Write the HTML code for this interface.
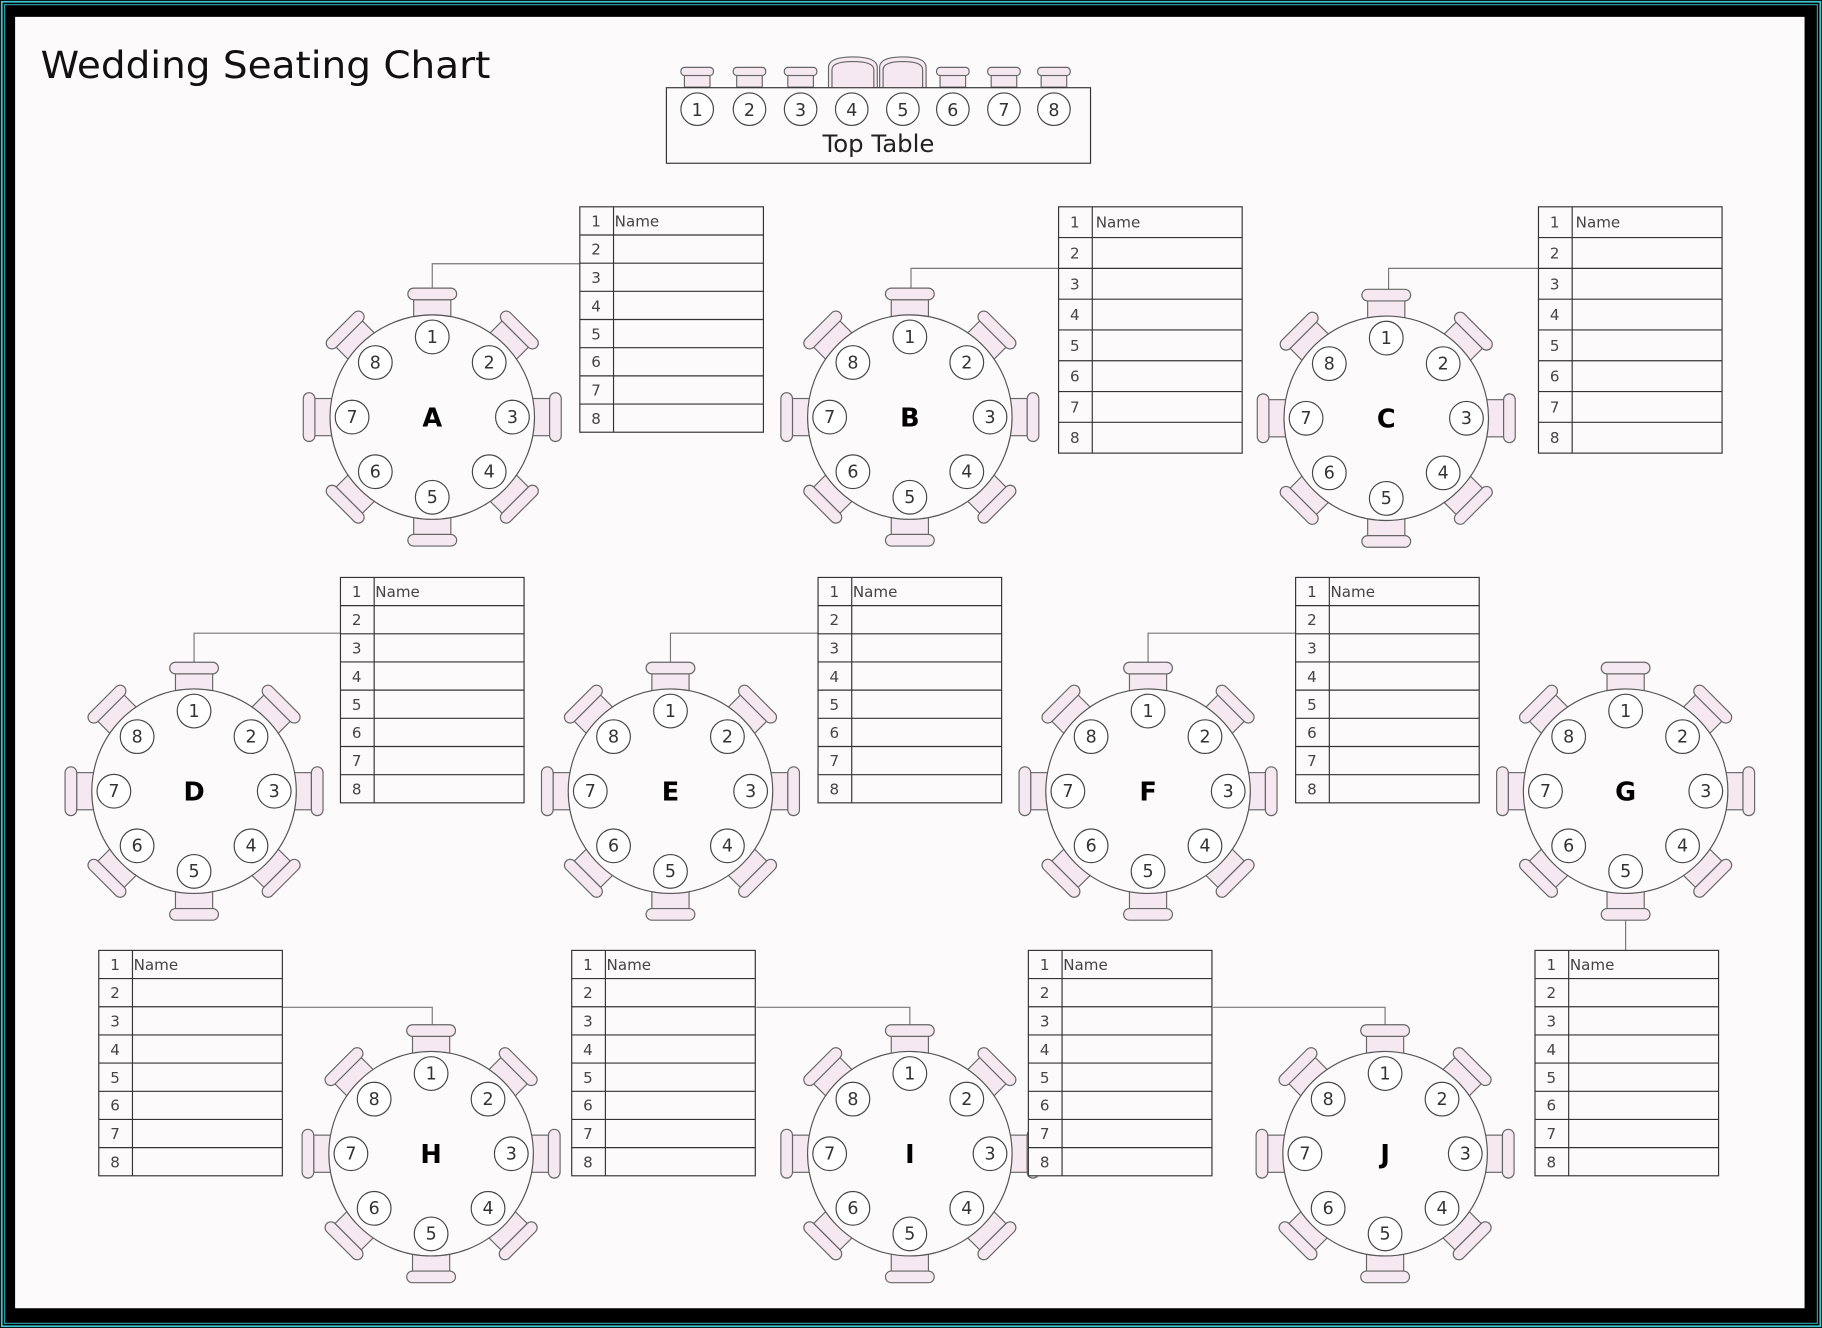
<!DOCTYPE html>
<html><head><meta charset="utf-8"><style>
html,body{margin:0;padding:0;background:#000;}
svg{display:block;}
text{font-family:"DejaVu Sans","Liberation Sans",sans-serif;fill:#333;}
.n{font-size:15px;text-anchor:middle;}
.L{font-size:22px;font-weight:bold;text-anchor:middle;fill:#000;}
.r{font-size:13px;text-anchor:middle;fill:#444;}
.nm{font-size:13px;fill:#444;}
</style></head><body>
<svg width="1822" height="1328" viewBox="0 0 1568 1143" preserveAspectRatio="none" xmlns="http://www.w3.org/2000/svg">
<defs>
<g id="ch">
<rect x="-16" y="-101" width="32" height="16" fill="#f5e8f0" stroke="#666" stroke-width="1"/>
<rect x="-21" y="-111" width="42" height="10" rx="5" fill="#f5e8f0" stroke="#666" stroke-width="1"/>
</g>
<g id="rt">
<use href="#ch"/>
<use href="#ch" transform="rotate(45)"/>
<use href="#ch" transform="rotate(90)"/>
<use href="#ch" transform="rotate(135)"/>
<use href="#ch" transform="rotate(180)"/>
<use href="#ch" transform="rotate(225)"/>
<use href="#ch" transform="rotate(270)"/>
<use href="#ch" transform="rotate(315)"/>
<circle r="88" fill="#fdfafc" stroke="#555" stroke-width="1"/>
<g fill="#fff" stroke="#444" stroke-width="1">
<circle cx="0" cy="-69" r="14.5"/><circle cx="49" cy="-47" r="14.5"/><circle cx="69" cy="0" r="14.5"/><circle cx="49" cy="47" r="14.5"/>
<circle cx="0" cy="69" r="14.5"/><circle cx="-49" cy="47" r="14.5"/><circle cx="-69" cy="0" r="14.5"/><circle cx="-49" cy="-47" r="14.5"/>
</g>
</g>
<g id="tn">
<text class="n" x="0" y="-64">1</text><text class="n" x="49" y="-42">2</text><text class="n" x="69" y="5">3</text><text class="n" x="49" y="52">4</text>
<text class="n" x="0" y="74">5</text><text class="n" x="-49" y="52">6</text><text class="n" x="-69" y="5">7</text><text class="n" x="-49" y="-42">8</text>
</g>
<g id="ls" fill="none" stroke="#333" stroke-width="1">
<rect x="0" y="0" width="158" height="194"/>
<line x1="29" y1="0" x2="29" y2="194"/>
<path d="M0 24.25H158M0 48.5H158M0 72.75H158M0 97H158M0 121.25H158M0 145.5H158M0 169.75H158"/>
</g>
<g id="lt" fill="none" stroke="#333" stroke-width="1">
<rect x="0" y="0" width="158" height="212"/>
<line x1="29" y1="0" x2="29" y2="212"/>
<path d="M0 26.5H158M0 53H158M0 79.5H158M0 106H158M0 132.5H158M0 159H158M0 185.5H158"/>
</g>
<g id="lsn">
<text class="r" x="14" y="17">1</text><text class="r" x="14" y="41">2</text><text class="r" x="14" y="65.5">3</text><text class="r" x="14" y="90">4</text>
<text class="r" x="14" y="114">5</text><text class="r" x="14" y="138">6</text><text class="r" x="14" y="162.5">7</text><text class="r" x="14" y="187">8</text>
<text class="nm" x="30" y="17">Name</text>
</g>
<g id="ltn">
<text class="r" x="14" y="18">1</text><text class="r" x="14" y="44.5">2</text><text class="r" x="14" y="71">3</text><text class="r" x="14" y="97.5">4</text>
<text class="r" x="14" y="124">5</text><text class="r" x="14" y="150.5">6</text><text class="r" x="14" y="177">7</text><text class="r" x="14" y="203.5">8</text>
<text class="nm" x="32" y="18">Name</text>
</g>
<g id="tc">
<rect x="-14" y="-36" width="28" height="7" rx="3" fill="#f5e8f0" stroke="#666"/>
<rect x="-11" y="-29" width="22" height="10" fill="#f5e8f0" stroke="#666"/>
</g>
</defs>

<rect x="0" y="0" width="1568" height="1143" fill="#000"/>
<rect x="1.5" y="1.5" width="1565" height="1140" fill="none" stroke="#3cc8d0" stroke-width="1.5"/>
<rect x="4" y="4" width="1560" height="1135" fill="none" stroke="#2aa0a8" stroke-width="1"/>
<rect x="13" y="14.5" width="1540" height="1111.5" fill="#fdfafc"/>

<text x="35" y="67" style="font-size:32px;fill:#111" textLength="387" lengthAdjust="spacingAndGlyphs">Wedding Seating Chart</text>

<!-- top table -->
<g>
<use href="#tc" transform="translate(600,94)"/>
<use href="#tc" transform="translate(645,94)"/>
<use href="#tc" transform="translate(689,94)"/>
<use href="#tc" transform="translate(820,94)"/>
<use href="#tc" transform="translate(864,94)"/>
<use href="#tc" transform="translate(907,94)"/>
<path d="M713 76V58Q713 49 734 49Q755 49 755 58V76Z" fill="#f5e8f0" stroke="#666"/>
<path d="M716 76V60Q716 53 734 53Q752 53 752 60V76" fill="none" stroke="#666"/>
<path d="M757 76V58Q757 49 777 49Q797 49 797 58V76Z" fill="#f5e8f0" stroke="#666"/>
<path d="M760 76V60Q760 53 777 53Q794 53 794 60V76" fill="none" stroke="#666"/>
<rect x="573.5" y="75.5" width="365" height="65" fill="#fdfafc" stroke="#333"/>
<g fill="#fff" stroke="#444">
<circle cx="600" cy="94" r="14"/><circle cx="645" cy="94" r="14"/><circle cx="689" cy="94" r="14"/><circle cx="733" cy="94" r="14"/>
<circle cx="777" cy="94" r="14"/><circle cx="820" cy="94" r="14"/><circle cx="864" cy="94" r="14"/><circle cx="907" cy="94" r="14"/>
</g>
<text class="n" x="600" y="100">1</text><text class="n" x="645" y="100">2</text><text class="n" x="689" y="100">3</text><text class="n" x="733" y="100">4</text>
<text class="n" x="777" y="100">5</text><text class="n" x="820" y="100">6</text><text class="n" x="864" y="100">7</text><text class="n" x="907" y="100">8</text>
<text x="756" y="131" style="font-size:21px;text-anchor:middle;fill:#222">Top Table</text>
</g>

<!-- connectors -->
<g fill="none" stroke="#777" stroke-width="1">
<path d="M372 249V227H499"/>
<path d="M784 250V231H911"/>
<path d="M1195 250V231H1324"/>
<path d="M167 571V545H293"/>
<path d="M577 571V545H704"/>
<path d="M988 571V545H1115"/>
<path d="M1399 790V818"/>
<path d="M243 867H372V884"/>
<path d="M651 867H783V884"/>
<path d="M1044 867H1192V884"/>
</g>

<!-- round tables -->
<g transform="translate(372,359)"><use href="#rt"/><use href="#tn"/><text class="L" x="0" y="8">A</text></g>
<g transform="translate(783,359)"><use href="#rt"/><use href="#tn"/><text class="L" x="0" y="8">B</text></g>
<g transform="translate(1193,360)"><use href="#rt"/><use href="#tn"/><text class="L" x="0" y="8">C</text></g>
<g transform="translate(167,681)"><use href="#rt"/><use href="#tn"/><text class="L" x="0" y="8">D</text></g>
<g transform="translate(577,681)"><use href="#rt"/><use href="#tn"/><text class="L" x="0" y="8">E</text></g>
<g transform="translate(988,681)"><use href="#rt"/><use href="#tn"/><text class="L" x="0" y="8">F</text></g>
<g transform="translate(1399,681)"><use href="#rt"/><use href="#tn"/><text class="L" x="0" y="8">G</text></g>
<g transform="translate(371,993)"><use href="#rt"/><use href="#tn"/><text class="L" x="0" y="8">H</text></g>
<g transform="translate(783,993)"><use href="#rt"/><use href="#tn"/><text class="L" x="0" y="8">I</text></g>
<g transform="translate(1192,993)"><use href="#rt"/><use href="#tn"/><text class="L" x="0" y="8">J</text></g>

<!-- lists -->
<g transform="translate(499,178)"><rect width="158" height="194" fill="#fdfafc"/><use href="#ls"/><use href="#lsn"/></g>
<g transform="translate(911,178)"><rect width="158" height="212" fill="#fdfafc"/><use href="#lt"/><use href="#ltn"/></g>
<g transform="translate(1324,178)"><rect width="158" height="212" fill="#fdfafc"/><use href="#lt"/><use href="#ltn"/></g>
<g transform="translate(293,497)"><rect width="158" height="194" fill="#fdfafc"/><use href="#ls"/><use href="#lsn"/></g>
<g transform="translate(704,497)"><rect width="158" height="194" fill="#fdfafc"/><use href="#ls"/><use href="#lsn"/></g>
<g transform="translate(1115,497)"><rect width="158" height="194" fill="#fdfafc"/><use href="#ls"/><use href="#lsn"/></g>
<g transform="translate(85,818)"><rect width="158" height="194" fill="#fdfafc"/><use href="#ls"/><use href="#lsn"/></g>
<g transform="translate(492,818)"><rect width="158" height="194" fill="#fdfafc"/><use href="#ls"/><use href="#lsn"/></g>
<g transform="translate(885,818)"><rect width="158" height="194" fill="#fdfafc"/><use href="#ls"/><use href="#lsn"/></g>
<g transform="translate(1321,818)"><rect width="158" height="194" fill="#fdfafc"/><use href="#ls"/><use href="#lsn"/></g>
</svg>
</body></html>
